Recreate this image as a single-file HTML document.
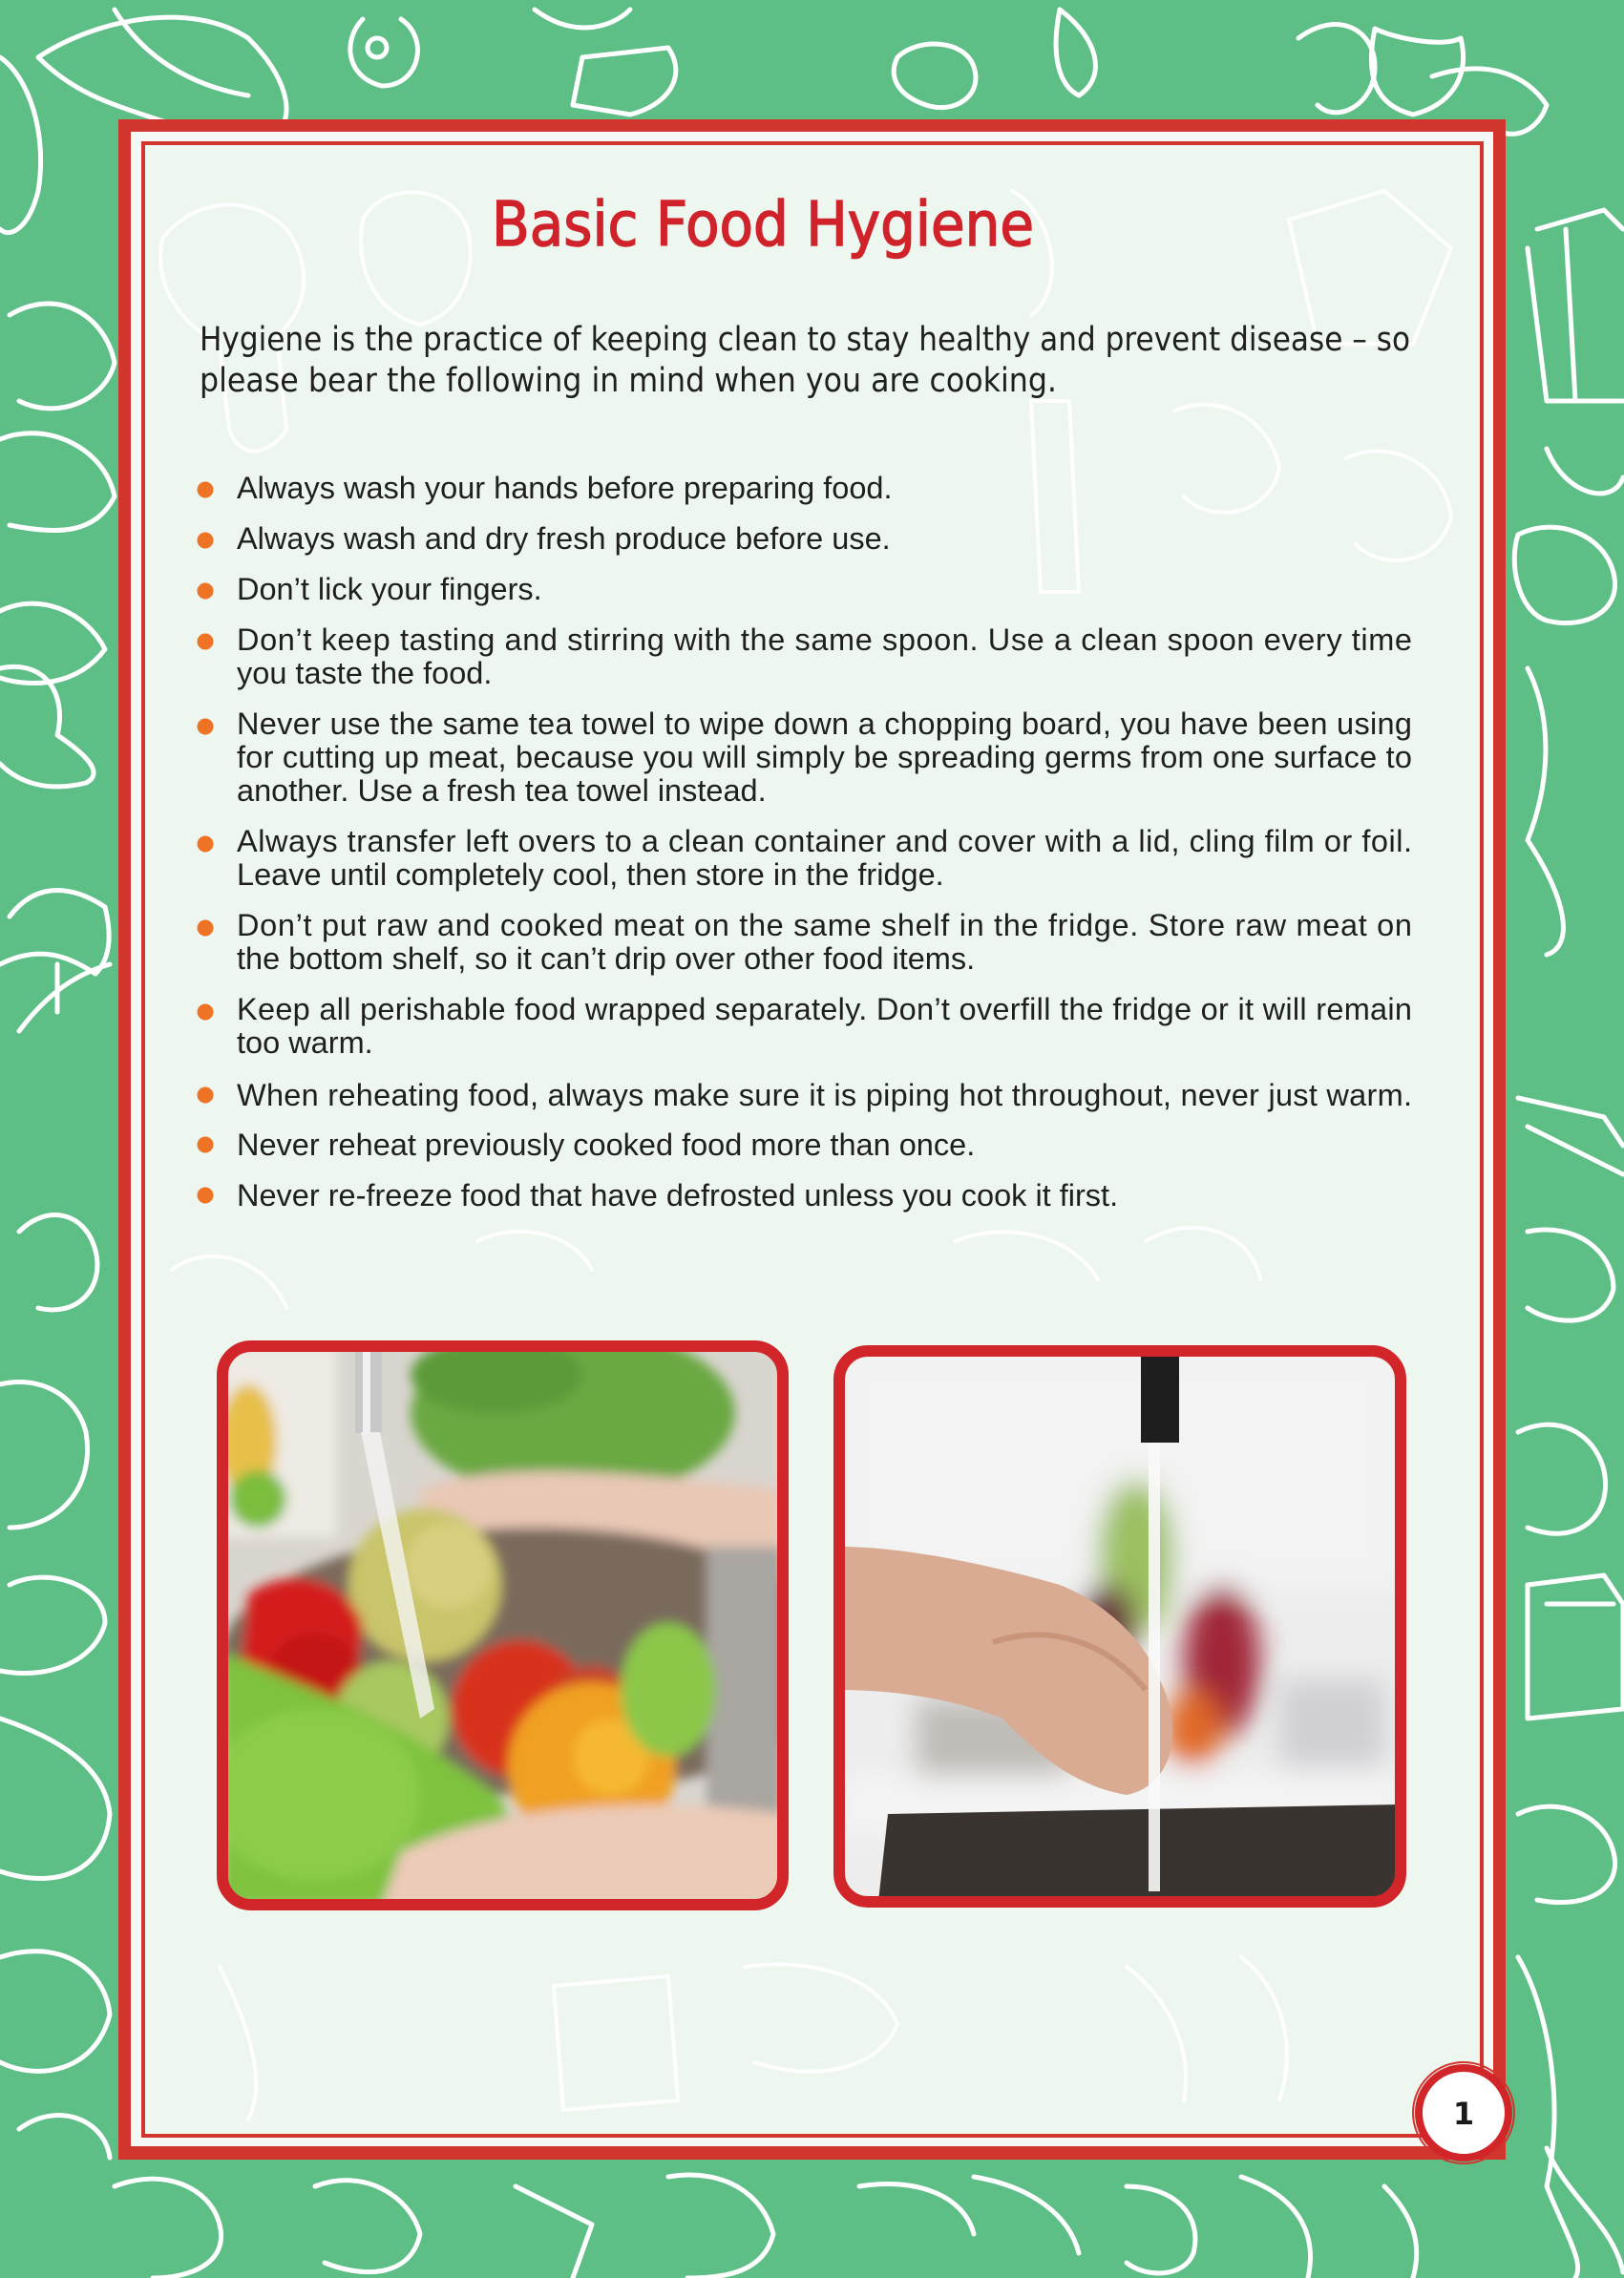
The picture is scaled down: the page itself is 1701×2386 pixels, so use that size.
<!DOCTYPE html>
<html><head><meta charset="utf-8"><style>
html,body{margin:0;padding:0;width:1701px;height:2386px;overflow:hidden;background:#5dbe86}
svg{display:block}
</style></head><body>
<svg width="1701" height="2386" viewBox="0 0 1701 2386" xmlns="http://www.w3.org/2000/svg">
<defs>
<filter id="b6" x="-20%" y="-20%" width="140%" height="140%"><feGaussianBlur stdDeviation="6"/></filter>
<filter id="b14" x="-30%" y="-30%" width="160%" height="160%"><feGaussianBlur stdDeviation="14"/></filter>
<clipPath id="c1"><rect x="233" y="1410" width="587" height="585" rx="30"/></clipPath>
<clipPath id="c2"><rect x="879" y="1415" width="588" height="577" rx="30"/></clipPath>
</defs>
<rect width="1701" height="2386" fill="#5dbe86"/>
<g fill="none" stroke="#fff" stroke-width="5" stroke-linecap="round" stroke-linejoin="round">
<path d="M40 60 C100 20 200 0 260 40 C300 80 310 120 290 140 L180 130 C120 110 80 100 40 60Z"/>
<path d="M120 10 C150 60 200 90 260 100"/>
<path d="M380 20 C360 40 360 80 400 90 C440 90 450 40 420 20"/>
<circle cx="395" cy="50" r="10"/>
<path d="M560 10 C600 40 640 30 660 10"/>
<path d="M610 60 L700 50 C720 80 700 110 660 120 L600 110Z"/>
<path d="M940 60 C960 40 1010 40 1020 70 C1030 100 1000 120 970 110 C940 100 930 80 940 60Z"/>
<path d="M1110 10 C1150 40 1160 80 1130 100 C1110 90 1100 60 1110 10Z"/>
<path d="M1360 40 C1400 10 1440 30 1440 70 C1440 110 1400 130 1380 110"/>
<path d="M1440 30 C1430 80 1440 110 1480 120 C1520 110 1540 80 1530 40 C1510 50 1460 40 1440 30Z"/>
<path d="M1500 80 C1560 60 1600 80 1620 110 C1610 140 1580 150 1560 130"/>
<path d="M0 60 C30 80 50 140 40 200 C30 240 10 250 0 240"/>
<path d="M1610 240 L1680 220 L1700 240 M1600 260 L1620 420 L1700 420 M1640 240 L1650 420"/>
<path d="M1620 470 C1640 520 1690 530 1700 500"/>
<path d="M1590 560 C1630 540 1680 560 1690 600 C1700 640 1660 660 1620 650 C1590 640 1580 590 1590 560Z"/>
<path d="M1600 700 C1630 760 1620 830 1600 880 C1640 940 1650 990 1620 1000"/>
<path d="M1590 1150 L1680 1170 L1700 1200 M1600 1180 C1640 1200 1680 1220 1700 1230"/>
<path d="M1600 1290 C1650 1280 1690 1310 1690 1350 C1680 1390 1630 1390 1600 1370"/>
<path d="M1590 1500 C1630 1480 1670 1500 1680 1540 C1690 1590 1650 1620 1600 1600"/>
<path d="M1600 1660 L1680 1650 L1700 1680 L1700 1790 L1600 1800Z M1620 1680 L1690 1680"/>
<path d="M1590 1900 C1630 1880 1680 1900 1690 1940 C1700 1980 1660 2000 1610 1990"/>
<path d="M1590 2050 C1620 2100 1640 2200 1620 2290 C1640 2340 1660 2370 1650 2386"/>
<path d="M1620 2250 C1640 2300 1690 2330 1700 2380"/>
<path d="M10 330 C60 300 110 330 120 380 C110 420 60 440 20 420"/>
<path d="M0 460 C50 440 110 470 120 520 C100 560 60 560 10 550"/>
<path d="M0 640 C40 620 90 640 110 680 C80 720 30 720 0 710"/>
<path d="M0 700 C50 690 70 730 60 770 C90 790 110 810 90 820 C50 830 20 820 0 800"/>
<path d="M10 960 C40 920 80 930 110 950 C120 990 110 1010 100 1020 M0 1010 C40 990 70 1000 100 1020 M20 1080 C50 1040 80 1020 115 1010 M60 1010 L60 1060"/>
<path d="M20 1290 C50 1260 90 1270 100 1310 C110 1350 80 1380 40 1370"/>
<path d="M0 1450 C40 1440 80 1460 90 1500 C100 1560 60 1600 10 1600"/>
<path d="M10 1660 C50 1640 110 1660 110 1700 C100 1740 50 1760 0 1750"/>
<path d="M0 1800 C60 1820 110 1850 115 1900 C110 1960 60 1980 0 1960"/>
<path d="M0 2050 C60 2030 110 2060 115 2110 C100 2170 40 2180 0 2160"/>
<path d="M20 2230 C60 2200 110 2220 115 2260"/>
<path d="M120 2290 C170 2270 220 2290 230 2330 C240 2370 200 2386 160 2386"/>
<path d="M330 2290 C380 2270 430 2300 440 2340 C430 2386 380 2386 340 2370"/>
<path d="M540 2290 L620 2330 L600 2386 M700 2280 C760 2270 800 2300 810 2340 C800 2380 760 2386 720 2386"/>
<path d="M900 2290 C960 2280 1010 2300 1020 2340 M1020 2280 C1080 2290 1120 2320 1130 2360"/>
<path d="M1180 2290 C1230 2290 1260 2320 1250 2360 C1240 2386 1200 2386 1180 2370 M1300 2280 C1360 2300 1380 2340 1370 2386"/>
<path d="M1450 2290 C1480 2320 1490 2350 1480 2386"/>
</g>
<rect x="124" y="125" width="1453" height="2137" fill="#d1352d"/>
<rect x="137" y="138" width="1427" height="2110" fill="#f4f9f5"/>
<rect x="148" y="148" width="1406" height="2091" fill="#d1352d"/>
<rect x="152" y="152" width="1398" height="2083" fill="#eef6f0"/>
<g fill="none" stroke="#fff" stroke-width="4" opacity="0.9" stroke-linecap="round">
<path d="M170 250 C200 210 260 200 300 240 C330 280 320 330 290 350 L300 450 C280 480 250 480 240 450 L230 360 C190 340 160 300 170 250Z"/>
<path d="M380 230 C400 190 470 190 490 240 C500 290 480 330 440 340 C400 330 370 290 380 230Z"/>
<path d="M1060 200 C1100 220 1120 300 1080 330"/>
<path d="M1350 230 L1450 200 L1520 260 L1480 360 L1380 360Z"/>
<path d="M1230 430 C1280 410 1330 440 1340 490 C1330 540 1270 550 1240 520"/>
<path d="M1410 480 C1450 460 1510 480 1520 540 C1510 590 1450 600 1420 570"/>
<path d="M1080 420 L1120 420 L1130 620 L1090 620Z"/>
<path d="M180 1330 C220 1300 280 1320 300 1370"/>
<path d="M500 1300 C540 1280 600 1290 620 1330"/>
<path d="M1000 1300 C1050 1280 1120 1290 1150 1340"/>
<path d="M1200 1300 C1250 1270 1310 1290 1320 1340"/>
<path d="M230 2060 C260 2120 280 2180 260 2220"/>
<path d="M580 2080 L700 2070 L710 2200 L590 2210Z"/>
<path d="M780 2060 C850 2050 920 2070 940 2120 C920 2170 850 2180 790 2160"/>
<path d="M1180 2060 C1220 2090 1250 2140 1240 2200"/>
<path d="M1300 2050 C1340 2080 1360 2140 1340 2200"/>
</g>
<text x="515" y="257" textLength="568" lengthAdjust="spacingAndGlyphs" font-family="'DejaVu Sans', sans-serif" font-size="64" fill="#d0222a" stroke="#d0222a" stroke-width="1.5">Basic Food Hygiene</text>
<g font-family="'DejaVu Sans', sans-serif" font-size="35" fill="#1f1f1f">
<text x="209" y="367" textLength="1268" lengthAdjust="spacingAndGlyphs">Hygiene is the practice of keeping clean to stay healthy and prevent disease – so</text>
<text x="209" y="410" textLength="898" lengthAdjust="spacingAndGlyphs">please bear the following in mind when you are cooking.</text>
</g>
<g fill="#ee7325">
<circle cx="215" cy="513" r="8.5"/><circle cx="215" cy="566" r="8.5"/><circle cx="215" cy="619" r="8.5"/>
<circle cx="215" cy="672" r="8.5"/><circle cx="215" cy="761" r="8.5"/><circle cx="215" cy="884" r="8.5"/>
<circle cx="215" cy="972" r="8.5"/><circle cx="215" cy="1060" r="8.5"/><circle cx="215" cy="1147" r="8.5"/>
<circle cx="215" cy="1199" r="8.5"/><circle cx="215" cy="1252" r="8.5"/>
</g>
<g font-family="'Liberation Sans', Arial, sans-serif" font-size="32.5" fill="#1f1f1f">
<text x="248" y="522">Always wash your hands before preparing food.</text>
<text x="248" y="575">Always wash and dry fresh produce before use.</text>
<text x="248" y="628">Don’t lick your fingers.</text>
<text x="248" y="681" textLength="1231" lengthAdjust="spacing">Don’t keep tasting and stirring with the same spoon. Use a clean spoon every time</text>
<text x="248" y="716">you taste the food.</text>
<text x="248" y="769" textLength="1231" lengthAdjust="spacing">Never use the same tea towel to wipe down a chopping board, you have been using</text>
<text x="248" y="804" textLength="1231" lengthAdjust="spacing">for cutting up meat, because you will simply be spreading germs from one surface to</text>
<text x="248" y="839">another. Use a fresh tea towel instead.</text>
<text x="248" y="892" textLength="1231" lengthAdjust="spacing">Always transfer left overs to a clean container and cover with a lid, cling film or foil.</text>
<text x="248" y="927">Leave until completely cool, then store in the fridge.</text>
<text x="248" y="980" textLength="1231" lengthAdjust="spacing">Don’t put raw and cooked meat on the same shelf in the fridge. Store raw meat on</text>
<text x="248" y="1015">the bottom shelf, so it can’t drip over other food items.</text>
<text x="248" y="1068" textLength="1231" lengthAdjust="spacing">Keep all perishable food wrapped separately. Don’t overfill the fridge or it will remain</text>
<text x="248" y="1103">too warm.</text>
<text x="248" y="1158" textLength="1231" lengthAdjust="spacing">When reheating food, always make sure it is piping hot throughout, never just warm.</text>
<text x="248" y="1210">Never reheat previously cooked food more than once.</text>
<text x="248" y="1263">Never re-freeze food that have defrosted unless you cook it first.</text>
</g>
<g clip-path="url(#c1)">
<rect x="233" y="1410" width="587" height="585" fill="#d9d5cf"/>
<g filter="url(#b6)">
<rect x="233" y="1410" width="120" height="200" fill="#eeeae4"/>
<ellipse cx="600" cy="1480" rx="170" ry="90" fill="#6aa843"/>
<ellipse cx="520" cy="1440" rx="90" ry="40" fill="#5c9a38"/>
<ellipse cx="260" cy="1510" rx="30" ry="60" fill="#e8c04a"/>
<ellipse cx="270" cy="1570" rx="30" ry="30" fill="#7cbd3c"/>
<path d="M440 1560 C520 1530 640 1540 820 1560 L820 1720 C700 1700 560 1680 440 1620Z" fill="#e9c8b6"/>
<ellipse cx="560" cy="1740" rx="330" ry="140" fill="#7a6b5c"/>
<rect x="740" y="1620" width="80" height="300" fill="#a9a5a0"/>
<circle cx="445" cy="1660" r="80" fill="#c9c56a"/>
<circle cx="470" cy="1640" r="45" fill="#d9cf80"/>
<path d="M260 1670 C300 1640 360 1650 380 1700 L370 1800 C330 1820 280 1800 250 1770Z" fill="#d41f1f"/>
<circle cx="330" cy="1760" r="50" fill="#c41818"/>
<circle cx="545" cy="1790" r="72" fill="#d8301e"/>
<circle cx="620" cy="1790" r="45" fill="#c9402a"/>
<circle cx="620" cy="1850" r="88" fill="#f0a020"/>
<circle cx="640" cy="1840" r="40" fill="#f6b830"/>
<ellipse cx="700" cy="1770" rx="50" ry="70" fill="#8cc74a"/>
<circle cx="410" cy="1800" r="60" fill="#a9c860"/>
<path d="M233 1730 C300 1760 420 1800 520 1880 C560 1940 540 1995 520 1995 L233 1995Z" fill="#7ec23e"/>
<ellipse cx="330" cy="1880" rx="110" ry="90" fill="#8ccc48"/>
<path d="M420 1940 C520 1890 680 1880 820 1900 L820 1995 L400 1995Z" fill="#eccbb8"/>
</g>
<rect x="372" y="1416" width="28" height="85" fill="#c8c8c8"/>
<rect x="380" y="1416" width="8" height="85" fill="#f0f0f0"/>
<path d="M378 1500 L398 1500 L455 1790 L440 1800Z" fill="#f4f4f4" opacity="0.8"/>
</g>
<rect x="233" y="1410" width="587" height="585" rx="30" fill="none" stroke="#d1252a" stroke-width="12"/>
<g clip-path="url(#c2)">
<rect x="879" y="1415" width="588" height="577" fill="#ededed"/>
<g filter="url(#b14)">
<rect x="879" y="1415" width="588" height="250" fill="#f3f3f3"/>
<ellipse cx="1190" cy="1630" rx="40" ry="80" fill="#9cc060"/>
<ellipse cx="1160" cy="1700" rx="30" ry="40" fill="#6a3a40"/>
<ellipse cx="1280" cy="1740" rx="40" ry="80" fill="#a02838"/>
<ellipse cx="1250" cy="1810" rx="30" ry="40" fill="#e06828"/>
<rect x="1340" y="1760" width="110" height="90" fill="#d0d0d4"/>
<rect x="960" y="1780" width="160" height="90" fill="#c0bcb8"/>
<rect x="879" y="1860" width="588" height="60" fill="#f4f4f4"/>
</g>
<path d="M879 1620 C950 1620 1040 1640 1110 1660 C1160 1680 1200 1720 1215 1760 C1240 1810 1230 1870 1180 1880 C1120 1870 1080 1830 1050 1800 C1000 1780 940 1770 879 1770Z" fill="#d8ab92"/>
<path d="M1040 1720 C1100 1700 1160 1720 1200 1770" stroke="#c8957a" stroke-width="6" fill="none"/>
<path d="M930 1900 L1467 1890 L1467 1992 L920 1992Z" fill="#3a3431"/>
<rect x="1195" y="1421" width="40" height="90" fill="#1e1e1e"/>
<rect x="1203" y="1511" width="12" height="470" fill="#fafafa" opacity="0.9"/>
</g>
<rect x="879" y="1415" width="588" height="577" rx="30" fill="none" stroke="#d1252a" stroke-width="12"/>
<circle cx="1533" cy="2213" r="53" fill="none" stroke="#d1352d" stroke-width="2"/>
<circle cx="1533" cy="2213" r="47" fill="#fff" stroke="#d1252a" stroke-width="8"/>
<text x="1533" y="2225" text-anchor="middle" font-family="'DejaVu Sans', sans-serif" font-weight="bold" font-size="32" fill="#1a1a1a">1</text>
</svg>
</body></html>
